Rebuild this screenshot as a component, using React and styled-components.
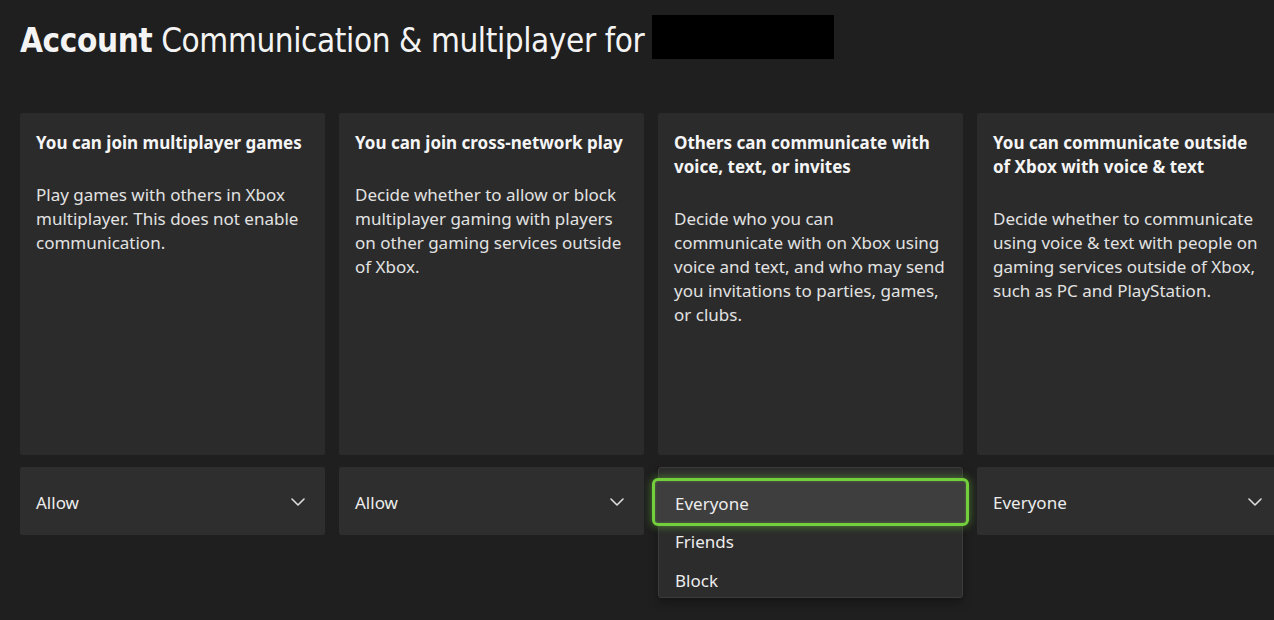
import React from "react";
import styled, { createGlobalStyle } from "styled-components";

const Global = createGlobalStyle`
  html, body { margin: 0; padding: 0; background: #1f1f1f; overflow: hidden; }
  body { font-family: "Noto Sans", "Open Sans", sans-serif; color: #fff; }
  * { box-sizing: border-box; }
`;

const Page = styled.div`
  width: 1274px;
  height: 620px;
  padding: 15px 0 0 20px;
  overflow: hidden;
  background: #1f1f1f;
`;

const Header = styled.header`
  display: flex;
  align-items: center;
  height: 44px;
  gap: 8px;
`;

const Title = styled.h1`
  margin: 0;
  padding-top: 6px;
  font-family: "DejaVu Sans Condensed", "Noto Sans", sans-serif;
  font-size: 33px;
  font-weight: 400;
  color: #f4f4f4;
  letter-spacing: -0.4px;
  white-space: nowrap;
  b { font-weight: 700; }
`;

const Redacted = styled.div`
  width: 182px;
  height: 44px;
  background: #000;
`;

const Columns = styled.div`
  display: flex;
  gap: 14px;
  margin-top: 54px;
`;

const Column = styled.div`
  flex: 0 0 305px;
  display: flex;
  flex-direction: column;
  gap: 12px;
`;

const Card = styled.section`
  height: 342px;
  background: #2b2b2b;
  border-radius: 2px;
  padding: 18px 17px 0 16px;
`;

const CardTitle = styled.h2`
  margin: 0 0 28px;
  font-size: 17px;
  line-height: 24px;
  font-weight: 700;
  color: #f5f5f5;
`;

const CardText = styled.p`
  margin: 0;
  font-size: 17px;
  line-height: 24px;
  color: #e2e2e2;
`;

const DropWrap = styled.div`
  position: relative;
  height: 68px;
`;

const Select = styled.div`
  height: 68px;
  background: #2e2e2e;
  border-radius: 2px;
  display: flex;
  align-items: center;
  justify-content: space-between;
  padding: 2px 20px 0 16px;
  font-size: 17px;
  color: #ececec;
`;

const Menu = styled.ul`
  position: absolute;
  top: 0;
  left: 0;
  width: 305px;
  height: 131px;
  margin: 0;
  padding: 10px 0 0;
  list-style: none;
  background: #2c2c2c;
  border: 1px solid #3b3b3b;
  border-radius: 3px;
  box-shadow: 0 4px 10px rgba(0,0,0,0.35);
  display: flex;
  flex-direction: column;
`;

const Item = styled.li`
  position: relative;
  flex: 0 0 39px;
  display: flex;
  align-items: center;
  padding: 1px 0 0 16px;
  font-size: 17px;
  color: #ececec;
  ${p => p.$focused && `
    flex: 0 0 48px;
    margin: 0 -7px -5px -7px;
    padding: 3px 0 0 20px;
    border: 3px solid #73cf3c;
    border-radius: 6px;
    background: #3e3e3e;
    box-shadow: 0 0 8px rgba(115, 207, 60, 0.55), inset 0 0 3px rgba(115,207,60,0.35);
  `}
`;

const Chevron = () => (
  <svg width="14" height="8" viewBox="0 0 14 8" fill="none">
    <path d="M1 1l6 6 6-6" stroke="#dcdcdc" strokeWidth="1.6" strokeLinecap="round" strokeLinejoin="round" />
  </svg>
);

const data = [
  {
    title: "You can join multiplayer games",
    text: "Play games with others in Xbox multiplayer. This does not enable communication.",
    value: "Allow",
  },
  {
    title: "You can join cross-network play",
    text: "Decide whether to allow or block multiplayer gaming with players on other gaming services outside of Xbox.",
    value: "Allow",
  },
  {
    title: "Others can communicate with voice, text, or invites",
    text: "Decide who you can communicate with on Xbox using voice and text, and who may send you invitations to parties, games, or clubs.",
    value: "Everyone",
    open: ["Everyone", "Friends", "Block"],
  },
  {
    title: "You can communicate outside of Xbox with voice & text",
    text: "Decide whether to communicate using voice & text with people on gaming services outside of Xbox, such as PC and PlayStation.",
    value: "Everyone",
  },
];

export default function App() {
  return (
    <Page>
      <Global />
      <Header>
        <Title><b>Account</b> Communication &amp; multiplayer for</Title>
        <Redacted />
      </Header>
      <Columns>
        {data.map((d, i) => (
          <Column key={i}>
            <Card>
              <CardTitle>{d.title}</CardTitle>
              <CardText>{d.text}</CardText>
            </Card>
            <DropWrap>
              {d.open ? (
                <Menu>
                  {d.open.map((o, j) => (
                    <Item key={o} $focused={j === 0}>{o}</Item>
                  ))}
                </Menu>
              ) : (
                <Select>
                  <span>{d.value}</span>
                  <Chevron />
                </Select>
              )}
            </DropWrap>
          </Column>
        ))}
      </Columns>
    </Page>
  );
}
